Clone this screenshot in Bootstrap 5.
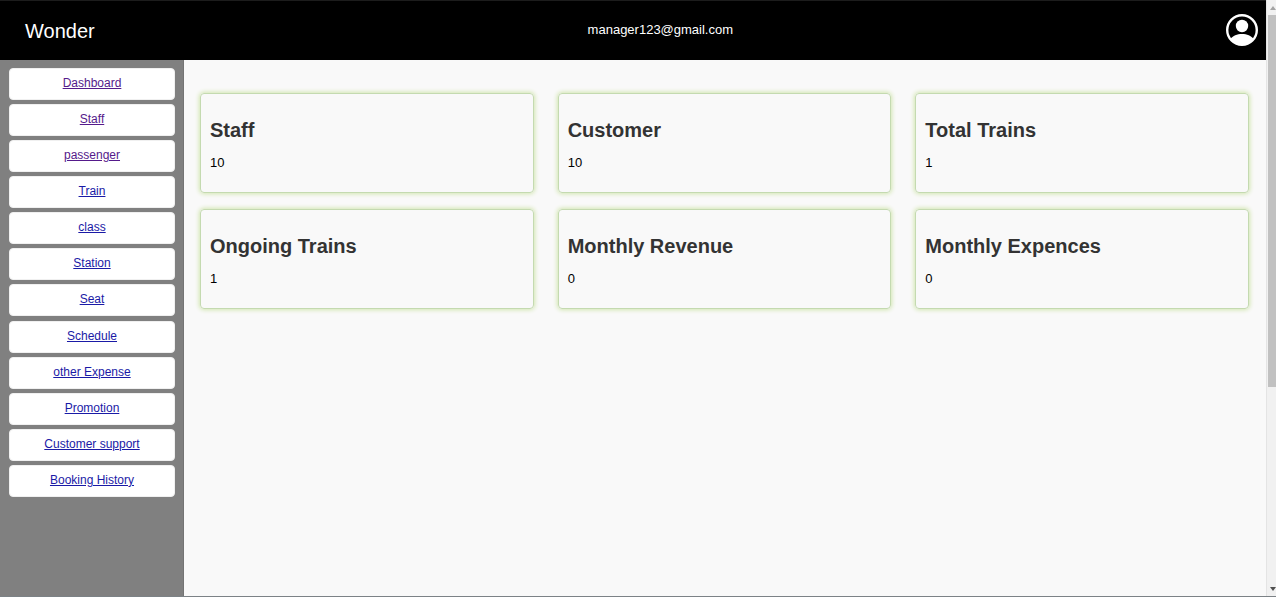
<!DOCTYPE html>
<html lang="en">
<head>
<meta charset="utf-8">
<meta name="viewport" content="width=device-width, initial-scale=1">
<title>Wonder</title>
<link href="https://cdn.jsdelivr.net/npm/bootstrap@5.3.0/dist/css/bootstrap.min.css" rel="stylesheet">
<style>
  body { font-family: "Liberation Sans", Arial, sans-serif; font-size: 13px; line-height: 20px; color: #000; background: #f9f9f9; }
  .frame { border-bottom: 1px solid #7c8286; }
  .topbar { height: 60px; background: #000; color: #fff; border-top: 1px solid #1c1c1c; padding: 0 8px 2px 25px; }
  .topbar .title { font-size: 20px; line-height: 24px; color: #fff; padding-top: 2px; }
  .sidebar { width: 184px; background: #808080; border-right: 1px solid #747474; padding: 8px 8px 8px 9px; }
  .menu { min-height: 429px; gap: 4px; }
  .menu a { display: block; height: 32px; border: 1px solid #f0f0f0; border-radius: 4px; background: #fff; color: #1a1aa6; font-size: 12px; line-height: 29px; text-align: center; }
  .menu a.seen { color: #551a8b; }
  .content { padding: 33px 17px 16px 16px; }
  .stats { --bs-gutter-x: 24px; --bs-gutter-y: 16px; }
  .stat { height: 100px; padding: 24px 9px 0; border: 1px solid #c4dab0; border-radius: 4px; box-shadow: 0 0 4px 1px #d2e6b0; }
  .stat h2 { margin: 0 0 8px; font-size: 20px; line-height: 24px; font-weight: 700; color: #333; }
  .stat p { margin: 0; line-height: 26px; }
  .scroller { width: 10px; background: #f1f1f1; border-left: 1px solid #e4e4e4; }
  .scroller .end { height: 15px; }
  .scroller .thumb { flex: 372 1 0; background: #c1c1c1; margin-left: 1px; }
  .scroller .rest { flex: 194 1 0; }
</style>
</head>
<body>
<div class="frame d-flex min-vh-100">
  <div class="d-flex flex-column flex-grow-1">
    <header class="topbar d-flex align-items-center justify-content-between">
      <a class="title text-decoration-none" href="#">Wonder</a>
      <div>manager123@gmail.com</div>
      <button type="button" class="btn p-0 border-0 d-flex" aria-label="Account">
        <svg width="32" height="32" viewBox="0 0 32 32" aria-hidden="true">
          <defs><clipPath id="disc"><circle cx="16" cy="16" r="15"/></clipPath></defs>
          <circle cx="16" cy="16" r="14.800" fill="#000" stroke="#fff" stroke-width="2.400"/>
          <circle cx="16" cy="12" r="6.200" fill="#fff"/>
          <path clip-path="url(#disc)" fill="#fff" d="M4 25.500C7 21.500 11 20 16 20s9 1.500 12 5.500V32H4z"/>
        </svg>
      </button>
    </header>
    <div class="d-flex flex-grow-1">
      <nav class="sidebar flex-shrink-0">
        <div class="menu d-flex flex-column justify-content-between">
          <a class="seen" href="#">Dashboard</a>
          <a class="seen" href="#">Staff</a>
          <a class="seen" href="#">passenger</a>
          <a href="#">Train</a>
          <a href="#">class</a>
          <a href="#">Station</a>
          <a href="#">Seat</a>
          <a href="#">Schedule</a>
          <a href="#">other Expense</a>
          <a href="#">Promotion</a>
          <a href="#">Customer support</a>
          <a href="#">Booking History</a>
        </div>
      </nav>
      <main class="content flex-grow-1">
        <div class="row row-cols-3 stats mt-0">
          <div class="col mt-0"><section class="stat"><h2>Staff</h2><p>10</p></section></div>
          <div class="col mt-0"><section class="stat"><h2>Customer</h2><p>10</p></section></div>
          <div class="col mt-0"><section class="stat"><h2>Total Trains</h2><p>1</p></section></div>
          <div class="col"><section class="stat"><h2>Ongoing Trains</h2><p>1</p></section></div>
          <div class="col"><section class="stat"><h2>Monthly Revenue</h2><p>0</p></section></div>
          <div class="col"><section class="stat"><h2>Monthly Expences</h2><p>0</p></section></div>
        </div>
      </main>
    </div>
  </div>
  <div class="scroller d-flex flex-column flex-shrink-0" aria-hidden="true">
    <div class="end d-flex align-items-center justify-content-end"><svg width="6" height="4" viewBox="0 0 6 4"><path d="M0 4l3-4 3 4z" fill="#a3a3a3"/></svg></div>
    <div class="thumb"></div>
    <div class="rest"></div>
    <div class="end d-flex align-items-center justify-content-end"><svg width="6" height="4" viewBox="0 0 6 4"><path d="M0 0l3 4 3-4z" fill="#505050"/></svg></div>
  </div>
</div>
<script src="https://cdn.jsdelivr.net/npm/bootstrap@5.3.0/dist/js/bootstrap.bundle.min.js"></script>
</body>
</html>
